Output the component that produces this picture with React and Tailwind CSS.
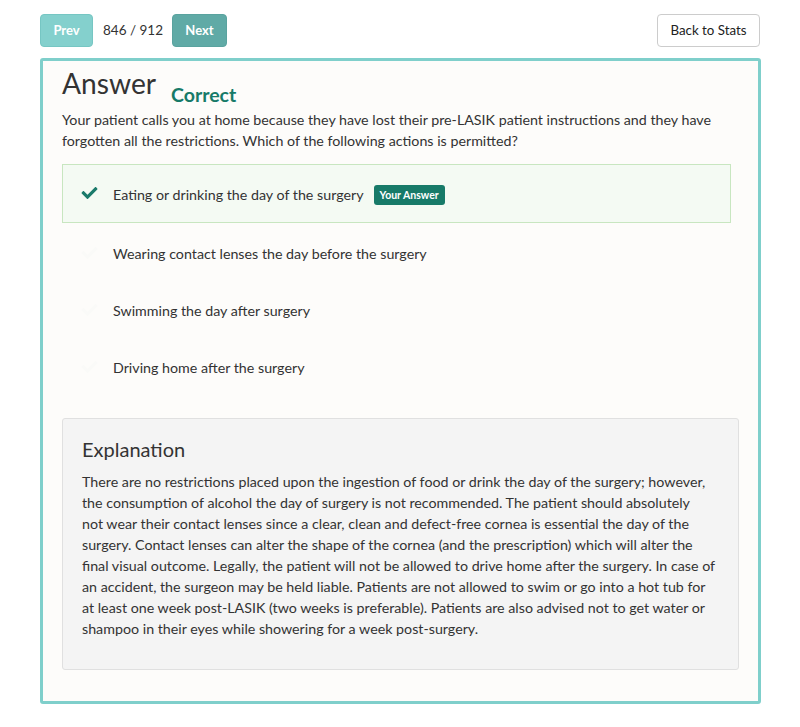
import { FaCheck } from "react-icons/fa";

const options = [
  { text: "Eating or drinking the day of the surgery", mine: true },
  { text: "Wearing contact lenses the day before the surgery" },
  { text: "Swimming the day after surgery" },
  { text: "Driving home after the surgery" },
];

const explanation = [
  "There are no restrictions placed upon the ingestion of food or drink the day of the surgery; however,",
  "the consumption of alcohol the day of surgery is not recommended. The patient should absolutely",
  "not wear their contact lenses since a clear, clean and defect-free cornea is essential the day of the",
  "surgery. Contact lenses can alter the shape of the cornea (and the prescription) which will alter the",
  "final visual outcome. Legally, the patient will not be allowed to drive home after the surgery. In case of",
  "an accident, the surgeon may be held liable. Patients are not allowed to swim or go into a hot tub for",
  "at least one week post-LASIK (two weeks is preferable). Patients are also advised not to get water or",
  "shampoo in their eyes while showering for a week post-surgery.",
];

export default function App() {
  return (
    <div className="min-h-screen bg-white text-[#333] font-['Lato','Liberation_Sans',sans-serif]">
      <div className="ml-[40px] w-[721px] pt-[14px]">
        <div className="flex items-center justify-between">
          <div className="flex items-center">
            <button className="h-[33px] w-[53px] rounded-[4px] border border-[#76c6c3] bg-[#84d0cd] text-[13px] font-bold text-white">
              Prev
            </button>
            <span className="ml-[10px] mr-[9px] text-[13.5px] text-[#333]">846 / 912</span>
            <button className="h-[33px] w-[55px] rounded-[4px] border border-[#5aa39f] bg-[#60aaa6] text-[13px] font-bold text-white">
              Next
            </button>
          </div>
          <button className="mr-[1px] h-[33px] w-[103px] rounded-[4px] border border-[#cccccc] bg-white text-[13.3px] text-[#222]">
            Back to Stats
          </button>
        </div>

        <section className="mt-[11px] rounded-[3px] border-[3px] border-[#7fcfcb] bg-[#fdfcfa] px-[19px] pt-[6px] pb-[31px]">
          <div className="flex items-start">
            <h1 className="text-[28.2px] leading-[33px] font-normal text-[#333]">Answer</h1>
            <span className="ml-[15px] mt-[16px] text-[19.5px] leading-[24px] font-bold text-[#177a68]">Correct</span>
          </div>
          <p className="mt-[2px] text-[14.25px] leading-[21px]">
            Your patient calls you at home because they have lost their pre-LASIK patient instructions and they have
            forgotten all the restrictions. Which of the following actions is permitted?
          </p>

          <div className="mt-[13px] w-[669px]">
            {options.map((o) =>
              o.mine ? (
                <div
                  key={o.text}
                  className="flex h-[59px] items-center border border-[#c8e6c0] bg-[#f4faf3] pl-[17px] pt-[2px]"
                >
                  <FaCheck className="-mt-[4px] h-[16px] w-[19px] text-[#1a7a6a]" />
                  <span className="ml-[14px] text-[14.25px] leading-[21px]">{o.text}</span>
                  <span className="ml-[10px] rounded-[3px] bg-[#177a68] px-[6px] text-[10.5px] leading-[20px] font-bold text-white">
                    Your Answer
                  </span>
                </div>
              ) : (
                <div key={o.text} className="flex h-[57px] items-center border border-transparent pl-[17px] pt-[3px]">
                  <FaCheck className="h-[16px] w-[19px] text-[#fafaf8]" />
                  <span className="ml-[14px] text-[14.25px] leading-[21px]">{o.text}</span>
                </div>
              )
            )}
          </div>

          <div className="mt-[24px] rounded-[3px] border border-[#e0e0e0] bg-[#f4f4f4] px-[19px] pt-[18px] pb-[30px]">
            <h2 className="text-[20px] leading-[24px] font-normal text-[#333]">Explanation</h2>
            <p className="mt-[10px] whitespace-nowrap text-[14.25px] leading-[21px]">
              {explanation.map((line, i) => (
                <span key={i} className="block">{line}</span>
              ))}
            </p>
          </div>
        </section>
      </div>
    </div>
  );
}
